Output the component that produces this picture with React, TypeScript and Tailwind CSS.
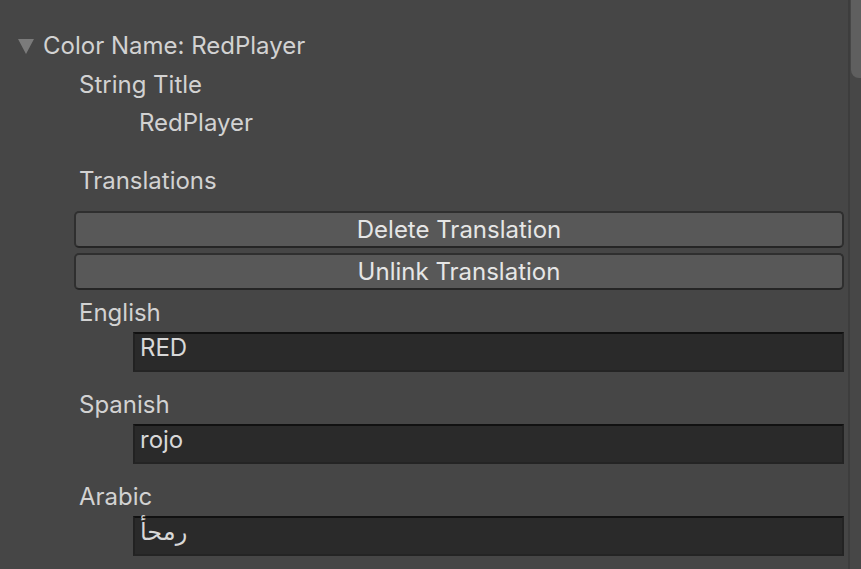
import React from 'react';

const Label: React.FC<{ text: string; className?: string }> = ({ text, className = '' }) => (
  <div className={`pl-[79px] h-[28px] leading-[28px] text-[#d2d2d2] ${className}`}>{text}</div>
);

const Btn: React.FC<{ text: string; className?: string }> = ({ text, className = '' }) => (
  <div
    className={`ml-[74px] h-[37px] rounded-[5px] border-2 border-[#2f2f2f] border-b-[#252525] bg-[#585858] flex items-center justify-center text-[#e6e6e6] leading-[28px] ${className}`}
  >
    {text}
  </div>
);

const Field: React.FC<{ children: React.ReactNode; className?: string }> = ({ children, className = '' }) => (
  <div
    className={`ml-[133px] h-[40px] bg-[#2a2a2a] border-t-2 border-t-[#111111] border-l-2 border-l-[#222222] border-r-2 border-r-[#232323] border-b-2 border-b-[#242424] pl-[5px] leading-[28px] text-[#d8d8d8] ${className}`}
  >
    {children}
  </div>
);

export default function App() {
  return (
    <div
      className="w-[861px] h-[569px] bg-[#464646] flex overflow-hidden text-[24px]"
      style={{ fontFamily: 'Inter, "Noto Sans", "DejaVu Sans", sans-serif' }}
    >
      <div className="flex-1 pr-[4px] pt-[32px] flex flex-col">
        <div className="flex items-center h-[28px] leading-[28px] text-[#d2d2d2]">
          <svg width="16" height="15" viewBox="0 0 16 15" className="ml-[18px] mr-[9px]">
            <polygon points="0,0 16,0 8,15" fill="#7b7b7b" />
          </svg>
          <span>Color Name: RedPlayer</span>
        </div>
        <Label text="String Title" className="mt-[11px]" />
        <div className="pl-[139px] h-[28px] leading-[28px] text-[#d2d2d2] mt-[10px]">RedPlayer</div>
        <Label text="Translations" className="mt-[30px]" />
        <Btn text="Delete Translation" className="mt-[16px]" />
        <Btn text="Unlink Translation" className="mt-[5px]" />
        <Label text="English" className="mt-[9px]" />
        <Field className="mt-[5px]">RED</Field>
        <Label text="Spanish" className="mt-[19px]" />
        <Field className="mt-[5px]">rojo</Field>
        <Label text="Arabic" className="mt-[19px]" />
        <Field className="mt-[5px]">رمحأ</Field>
      </div>
      <div className="w-[13px] h-full flex">
        <div className="w-[2px] h-full bg-[#3d3d3d]" />
        <div className="flex-1 h-full bg-[#474747] pl-[1px]">
          <div className="h-[78px] bg-[#5f5f5f] rounded-bl-[8px]" />
        </div>
      </div>
    </div>
  );
}
